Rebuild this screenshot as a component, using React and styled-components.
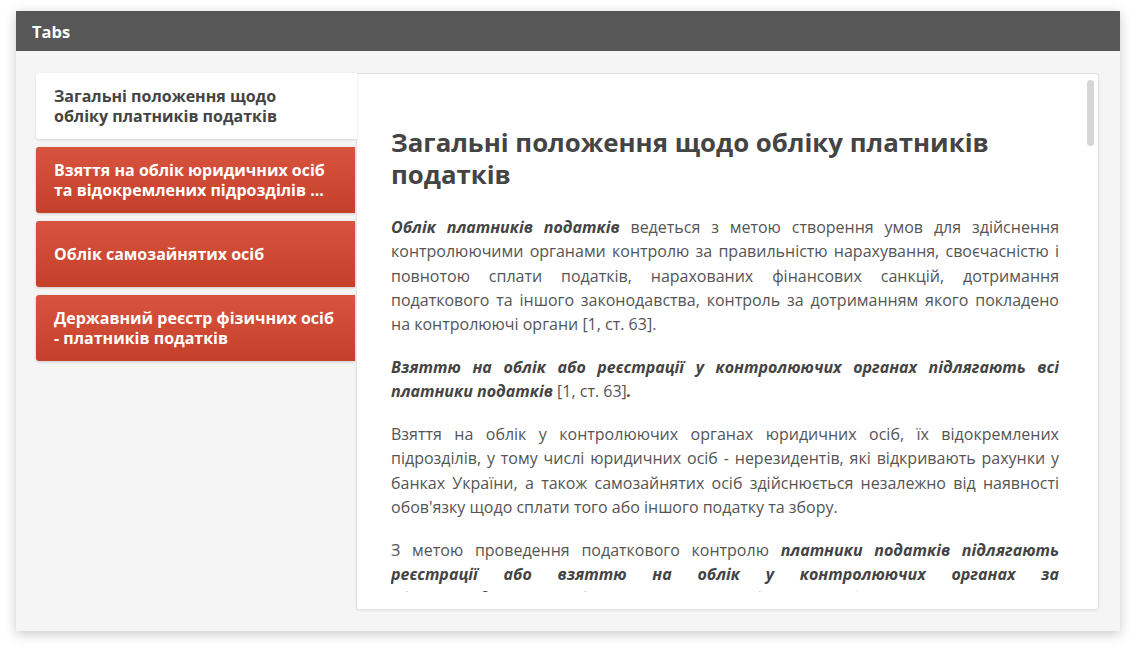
import React from "react";
import styled, { createGlobalStyle } from "styled-components";

const Global = createGlobalStyle`
  html, body { margin: 0; padding: 0; background: #ffffff; }
  body { font-family: "Open Sans", "Noto Sans", sans-serif; }
  * { box-sizing: border-box; }
`;

const Page = styled.div`
  padding: 11px 16px 0 16px;
  width: 1136px;
  height: 653px;
`;

const Card = styled.section`
  width: 1104px;
  height: 620px;
  background: #f5f5f5;
  box-shadow: 0 3px 12px rgba(0, 0, 0, 0.22);
  display: flex;
  flex-direction: column;
`;

const Header = styled.header`
  height: 40px;
  background: #575757;
  color: #ffffff;
  font-weight: 700;
  font-size: 16.5px;
  display: flex;
  align-items: center;
  padding-left: 16px;
`;

const Body = styled.div`
  flex: 1;
  display: flex;
  padding: 22px 21px 21px 20px;
  min-height: 0;
`;

const TabList = styled.nav`
  width: 320px;
  flex: none;
  display: flex;
  flex-direction: column;
  gap: 8px;
`;

const Tab = styled.div`
  height: 66px;
  display: flex;
  align-items: center;
  padding: 0 18px;
  font-size: 16px;
  font-weight: 700;
  line-height: 20px;
  border-radius: 3px 0 0 3px;
  color: ${(p) => (p.$active ? "#444444" : "#ffffff")};
  background: ${(p) =>
    p.$active ? "#ffffff" : "linear-gradient(180deg, #d8543e 0%, #c5402b 100%)"};
  box-shadow: ${(p) =>
    p.$active ? "0 1px 3px rgba(0,0,0,0.12)" : "0 1px 3px rgba(0,0,0,0.18)"};
  position: relative;
  z-index: ${(p) => (p.$active ? 2 : 0)};
  margin-right: ${(p) => (p.$active ? "-1px" : "1px")};
`;

const Panel = styled.article`
  flex: 1;
  background: #ffffff;
  border: 1px solid #e2e2e2;
  border-radius: 0 3px 3px 3px;
  box-shadow: 0 1px 3px rgba(0, 0, 0, 0.06);
  padding: 0 39px 17px 34px;
  position: relative;
  display: flex;
  flex-direction: column;
  min-height: 0;
`;

const Scroll = styled.div`
  flex: 1;
  overflow: hidden;
  min-height: 0;
`;

const Thumb = styled.div`
  position: absolute;
  right: 4px;
  top: 6px;
  width: 7px;
  height: 66px;
  border-radius: 4px;
  background: #d6d6d6;
`;

const Title = styled.h2`
  margin: 52px 0 25px;
  font-size: 25.8px;
  line-height: 32px;
  font-weight: 700;
  color: #444444;
`;

const Para = styled.p`
  margin: 0 0 18.5px;
  font-size: 16px;
  line-height: 24.3px;
  color: #555555;
  text-align: justify;
`;

const Em = styled.strong`
  font-weight: 700;
  font-style: italic;
  color: #444444;
`;

const tabs = [
  { id: 1, lines: ["Загальні положення щодо", "обліку платників податків"] },
  { id: 2, lines: ["Взяття на облік юридичних осіб", "та відокремлених підрозділів ..."] },
  { id: 3, lines: ["Облік самозайнятих осіб"] },
  { id: 4, lines: ["Державний реєстр фізичних осіб", "- платників податків"] },
];

export default function App() {
  return (
    <Page>
      <Global />
      <Card>
        <Header>Tabs</Header>
        <Body>
          <TabList>
            {tabs.map((t) => (
              <Tab key={t.id} $active={t.id === 1}>
                <span>
                  {t.lines.map((l, i) => (
                    <React.Fragment key={i}>
                      {i > 0 && <br />}
                      {l}
                    </React.Fragment>
                  ))}
                </span>
              </Tab>
            ))}
          </TabList>
          <Panel>
            <Thumb />
            <Scroll>
              <Title>Загальні положення щодо обліку платників податків</Title>
              <Para>
                <Em>Облік платників податків</Em> ведеться з метою створення умов для
                здійснення контролюючими органами контролю за правильністю нарахування,
                своєчасністю і повнотою сплати податків, нарахованих фінансових санкцій,
                дотримання податкового та іншого законодавства, контроль за дотриманням
                якого покладено на контролюючі органи [1, ст. 63].
              </Para>
              <Para>
                <Em>
                  Взяттю на облік або реєстрації у контролюючих органах підлягають всі
                  платники податків
                </Em>{" "}
                [1, ст. 63]<Em>.</Em>
              </Para>
              <Para>
                Взяття на облік у контролюючих органах юридичних осіб, їх відокремлених
                підрозділів, у тому числі юридичних осіб - нерезидентів, які відкривають
                рахунки у банках України, а також самозайнятих осіб здійснюється незалежно
                від наявності обов'язку щодо сплати того або іншого податку та збору.
              </Para>
              <Para>
                З метою проведення податкового контролю{" "}
                <Em>
                  платники податків підлягають реєстрації або взяттю на облік у
                  контролюючих органах за місцезнаходженням, місцем проживання фізичної
                  особи
                </Em>{" "}
                - платника податків, а також за місцем реєстрації відокремлених
                підрозділів [1, ст. 63].
              </Para>
            </Scroll>
          </Panel>
        </Body>
      </Card>
    </Page>
  );
}
